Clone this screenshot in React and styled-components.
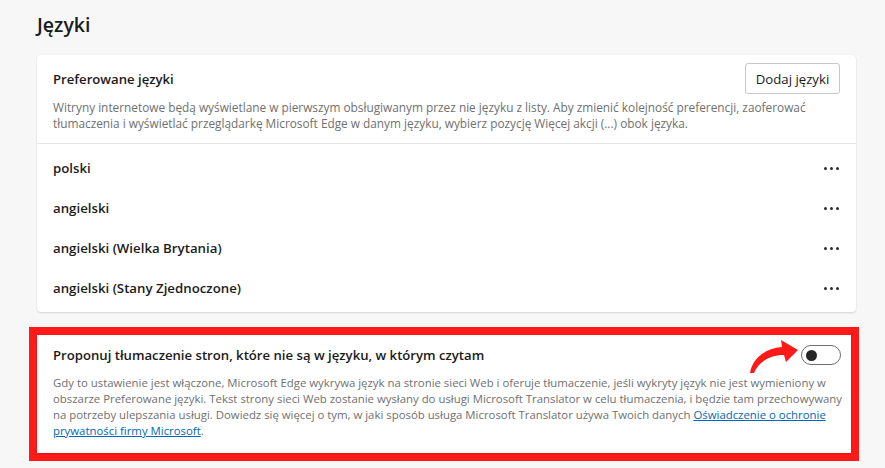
import React from 'react';
import styled, { createGlobalStyle } from 'styled-components';

const GlobalStyle = createGlobalStyle`
  html, body {
    margin: 0;
    padding: 0;
    background: #f7f7f7;
    font-family: "Open Sans", "Noto Sans", sans-serif;
    color: #1b1b1b;
  }
`;

const Page = styled.div`
  width: 819px;
  padding: 11px 0 0 37px;
`;

const Heading = styled.h1`
  margin: 0 0 16px;
  font-size: 19.5px;
  line-height: 28px;
  font-weight: 600;
`;

const Card = styled.section`
  position: relative;
  background: #fff;
  border-radius: 4px;
  box-shadow: 0 1px 2px rgba(0, 0, 0, 0.14), 0 0 1px rgba(0, 0, 0, 0.1);
`;

const CardHead = styled.div`
  padding: 8px 16px 12px;
  border-bottom: 1px solid #e4e4e4;
`;

const HeadRow = styled.div`
  display: flex;
  align-items: center;
  justify-content: space-between;
  height: 31px;
`;

const Title = styled.h2`
  margin: 0;
  font-size: 13.15px;
  line-height: 20px;
  font-weight: 600;
  color: #1b1b1b;
`;

const Button = styled.button`
  height: 31px;
  width: 95px;
  padding: 0;
  background: #fff;
  border: 1px solid #c8c8c8;
  border-radius: 3px;
  font-family: inherit;
  font-size: 13.2px;
  color: #1b1b1b;
`;

const Desc = styled.p`
  margin: ${p => p.$top || 5}px 0 0;
  font-size: ${p => p.$size || 12}px;
  line-height: 16px;
  color: #707070;
  white-space: nowrap;
`;

const List = styled.ul`
  list-style: none;
  margin: 0;
  padding: 4px 16px;
`;

const Row = styled.li`
  display: flex;
  align-items: center;
  justify-content: space-between;
  height: 40px;
  font-size: 13.25px;
  font-weight: 600;
`;

const Dots = styled.span`
  display: flex;
  gap: 3px;
  padding-right: 1px;
  span {
    width: 3px;
    height: 3px;
    border-radius: 50%;
    background: #2b2b2b;
  }
`;

const Highlight = styled.div`
  margin: 15px 0 0 -8px;
  width: 814px;
  border: 8px solid #ff1a1a;
`;

const ToggleCard = styled(Card)`
  padding: 10px 10px 14px 16px;
  border-radius: 0;
`;

const ToggleRow = styled.div`
  display: flex;
  align-items: center;
  justify-content: space-between;
  height: 20px;
`;

const Toggle = styled.span`
  display: flex;
  align-items: center;
  box-sizing: border-box;
  width: 40px;
  height: 20px;
  padding: 0 4px;
  border: 1px solid #6e6e6e;
  border-radius: 10px;
  &::before {
    content: '';
    width: 11px;
    height: 11px;
    border-radius: 50%;
    background: #262626;
  }
`;

const Link = styled.a`
  color: #0067b8;
  text-decoration: underline;
`;

const Arrow = styled.svg`
  position: absolute;
  left: 708px;
  top: -3px;
`;

const languages = [
  'polski',
  'angielski',
  'angielski (Wielka Brytania)',
  'angielski (Stany Zjednoczone)',
];

export default function App() {
  return (
    <>
      <GlobalStyle />
      <Page>
        <Heading>Języki</Heading>
        <Card>
          <CardHead>
            <HeadRow>
              <Title>Preferowane języki</Title>
              <Button>Dodaj języki</Button>
            </HeadRow>
            <Desc $size={11.83}>
              Witryny internetowe będą wyświetlane w pierwszym obsługiwanym przez nie języku z listy. Aby zmienić kolejność preferencji, zaoferować
              <br />
              tłumaczenia i wyświetlać przeglądarkę Microsoft Edge w danym języku, wybierz pozycję Więcej akcji (...) obok języka.
            </Desc>
          </CardHead>
          <List>
            {languages.map(l => (
              <Row key={l}>
                {l}
                <Dots><span /><span /><span /></Dots>
              </Row>
            ))}
          </List>
        </Card>
        <Highlight>
          <ToggleCard>
            <ToggleRow>
              <Title>Proponuj tłumaczenie stron, które nie są w języku, w którym czytam</Title>
              <Toggle />
            </ToggleRow>
            <Desc $top={10} $size={11.39}>
              Gdy to ustawienie jest włączone, Microsoft Edge wykrywa język na stronie sieci Web i oferuje tłumaczenie, jeśli wykryty język nie jest wymieniony w
              <br />
              obszarze Preferowane języki. Tekst strony sieci Web zostanie wysłany do usługi Microsoft Translator w celu tłumaczenia, i będzie tam przechowywany
              <br />
              na potrzeby ulepszania usługi. Dowiedz się więcej o tym, w jaki sposób usługa Microsoft Translator używa Twoich danych <Link href="#">Oświadczenie o ochronie
              <br />
              prywatności firmy Microsoft</Link>.
            </Desc>
            <Arrow width="56" height="46" viewBox="0 0 56 46">
              <path
                d="M5 41 C7 28 19 16 37 15 L36 8 L53 18 L41 30 L39 23 C26 23 14 29 9 41 Z"
                fill="#ff1a1a"
              />
            </Arrow>
          </ToggleCard>
        </Highlight>
      </Page>
    </>
  );
}
